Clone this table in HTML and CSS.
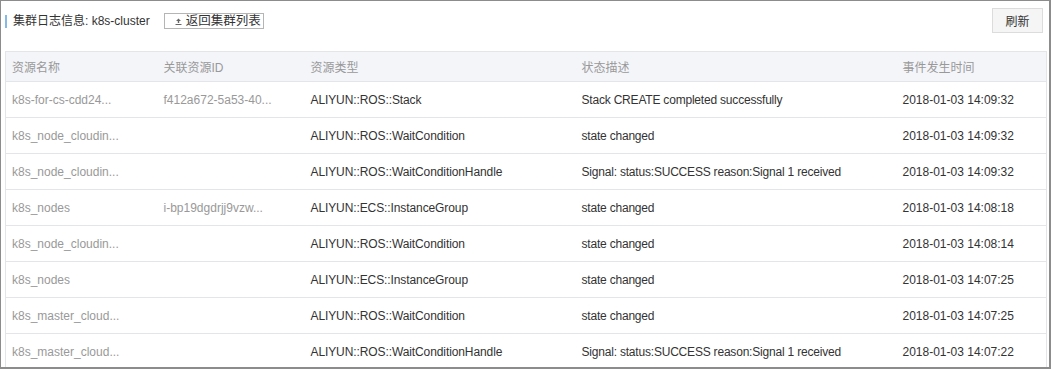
FILE: index.html
```html
<!DOCTYPE html>
<html lang="zh">
<head>
<meta charset="utf-8">
<title>集群日志信息</title>
<link rel="stylesheet" href="styles.css">
</head>
<body>
<div class="frame">
  <div class="toolbar">
    <div class="title-wrap">
      <span class="title-bar"></span>
      <span class="title">集群日志信息: k8s-cluster</span>
      <button class="back-btn" type="button">
        <svg class="back-icon" width="7" height="7" viewBox="0 0 7 7"><path d="M3.5 0.5 L6 3 H4.2 V5 H2.8 V3 H1 Z" fill="#666"/><rect x="0.5" y="6" width="6" height="1" fill="#666"/></svg>
        返回集群列表
      </button>
    </div>
    <button class="refresh-btn" type="button">刷新</button>
  </div>
  <table class="grid">
    <colgroup>
      <col class="c1"><col class="c2"><col class="c3"><col class="c4"><col class="c5">
    </colgroup>
    <thead>
      <tr><th>资源名称</th><th>关联资源ID</th><th>资源类型</th><th>状态描述</th><th>事件发生时间</th></tr>
    </thead>
    <tbody>
      <tr><td class="muted">k8s-for-cs-cdd24...</td><td class="muted">f412a672-5a53-40...</td><td class="type">ALIYUN::ROS::Stack</td><td class="desc">Stack CREATE completed successfully</td><td>2018-01-03 14:09:32</td></tr>
      <tr><td class="muted">k8s_node_cloudin...</td><td class="muted"></td><td class="type">ALIYUN::ROS::WaitCondition</td><td class="desc">state changed</td><td>2018-01-03 14:09:32</td></tr>
      <tr><td class="muted">k8s_node_cloudin...</td><td class="muted"></td><td class="type">ALIYUN::ROS::WaitConditionHandle</td><td class="desc">Signal: status:SUCCESS reason:Signal 1 received</td><td>2018-01-03 14:09:32</td></tr>
      <tr><td class="muted">k8s_nodes</td><td class="muted">i-bp19dgdrjj9vzw...</td><td class="type">ALIYUN::ECS::InstanceGroup</td><td class="desc">state changed</td><td>2018-01-03 14:08:18</td></tr>
      <tr><td class="muted">k8s_node_cloudin...</td><td class="muted"></td><td class="type">ALIYUN::ROS::WaitCondition</td><td class="desc">state changed</td><td>2018-01-03 14:08:14</td></tr>
      <tr><td class="muted">k8s_nodes</td><td class="muted"></td><td class="type">ALIYUN::ECS::InstanceGroup</td><td class="desc">state changed</td><td>2018-01-03 14:07:25</td></tr>
      <tr><td class="muted">k8s_master_cloud...</td><td class="muted"></td><td class="type">ALIYUN::ROS::WaitCondition</td><td class="desc">state changed</td><td>2018-01-03 14:07:25</td></tr>
      <tr><td class="muted">k8s_master_cloud...</td><td class="muted"></td><td class="type">ALIYUN::ROS::WaitConditionHandle</td><td class="desc">Signal: status:SUCCESS reason:Signal 1 received</td><td>2018-01-03 14:07:22</td></tr>
    </tbody>
  </table>
</div>
</body>
</html>
```
FILE: styles.css
```css
html, body {
  margin: 0;
  padding: 0;
  background: #fff;
}
body {
  font-family: "Liberation Sans", "Noto Sans CJK SC", sans-serif;
  font-size: 12px;
  color: #333;
}
.frame {
  width: 1051px;
  height: 369px;
  box-sizing: border-box;
  border-top: 1px solid #8c8c8c;
  border-left: 1px solid #8c8c8c;
  border-right: 2px solid #8c8c8c;
  border-bottom: 2px solid #8c8c8c;
  padding: 7px 6px 0 4px;
  overflow: hidden;
}
.toolbar {
  display: flex;
  justify-content: space-between;
  align-items: flex-start;
  height: 43px;
}
.title-wrap {
  display: flex;
  align-items: center;
  height: 16px;
  margin-top: 5px;
}
.title-bar {
  width: 2px;
  height: 13px;
  background: #86b9e6;
  margin-right: 6px;
}
.title {
  color: #333;
  line-height: 16px;
}
.back-btn {
  display: flex;
  align-items: center;
  margin-left: 14px;
  width: 100px;
  height: 16px;
  box-sizing: border-box;
  border: 1px solid #b5b5b5;
  background: #fff;
  padding: 0 0 0 10px;
  font: inherit;
  font-size: 12.5px;
  color: #333;
  line-height: 14px;
}
.back-icon {
  margin-right: 4px;
}
.refresh-btn {
  width: 51px;
  height: 25px;
  box-sizing: border-box;
  border: 1px solid #dcdcdc;
  background: #f5f5f5;
  font: inherit;
  color: #333;
  padding: 0;
}
.grid {
  width: 1042px;
  table-layout: fixed;
  border-collapse: collapse;
  border: 1px solid #e3e5e9;
}
.c1 { width: 152px; }
.c2 { width: 147px; }
.c3 { width: 271px; }
.c4 { width: 321px; }
.grid th {
  height: 29px;
  background: #f4f5f9;
  color: #999;
  font-weight: normal;
  text-align: left;
  padding: 0 0 0 6px;
  border-bottom: 1px solid #e3e5e9;
  white-space: nowrap;
}
.grid td {
  height: 35px;
  padding: 0 0 0 6px;
  border-bottom: 1px solid #e3e5e9;
  white-space: nowrap;
  overflow: hidden;
  color: #333;
}
.grid td.muted {
  color: #999;
}
.grid td.type {
  letter-spacing: -0.1px;
}
.grid td.desc {
  letter-spacing: -0.2px;
}
```
